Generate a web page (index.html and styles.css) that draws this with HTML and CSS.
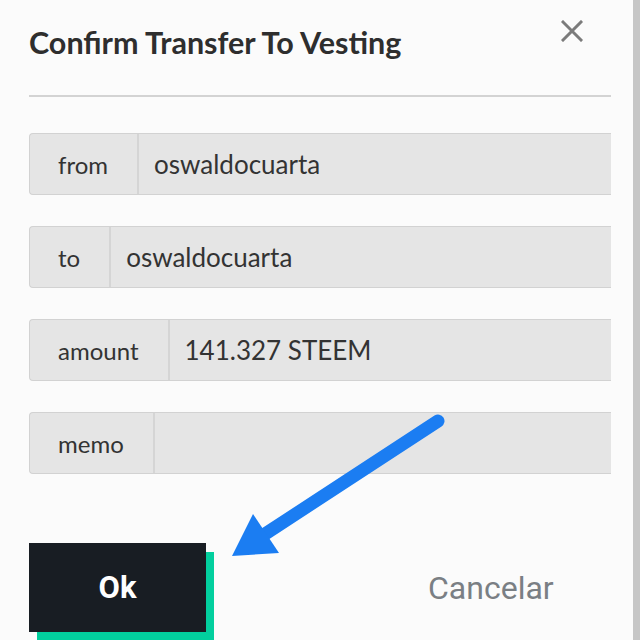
FILE: index.html
```html
<!DOCTYPE html>
<html>
<head>
<meta charset="utf-8">
<link rel="stylesheet" href="styles.css">
</head>
<body>
<div class="page">
  <div class="dialog">
    <div class="header">
      <h1 class="title">Confirm Transfer To Vesting</h1>
      <svg class="close" width="22" height="22" viewBox="0 0 22 22"><path d="M2 2L20 20M20 2L2 20" stroke="#7b7b7b" stroke-width="3" stroke-linecap="square"/></svg>
    </div>
    <div class="divider"></div>
    <div class="fields">
      <div class="field"><span class="label">from</span><span class="value">oswaldocuarta</span></div>
      <div class="field"><span class="label">to</span><span class="value">oswaldocuarta</span></div>
      <div class="field"><span class="label">amount</span><span class="value">141.327 STEEM</span></div>
      <div class="field"><span class="label">memo</span><span class="value"></span></div>
    </div>
    <div class="actions">
      <button class="ok">Ok</button>
      <button class="cancel">Cancelar</button>
    </div>
  </div>
  <div class="strip"></div>
  <svg class="arrow" width="640" height="640" viewBox="0 0 640 640">
    <line x1="438" y1="421" x2="262" y2="536" stroke="#1b7df2" stroke-width="13" stroke-linecap="round"/>
    <polygon points="232,556 253,514 279,553" fill="#1b7df2"/>
  </svg>
</div>
</body>
</html>
```
FILE: styles.css
```css
html, body {
  margin: 0;
  padding: 0;
  background: #fbfbfb;
}
.page {
  position: relative;
  display: flex;
  width: 640px;
  height: 640px;
  overflow: hidden;
}
.dialog {
  flex: 1;
  padding: 0 22px 0 29px;
  font-family: Lato, "Open Sans", sans-serif;
  color: #333;
}
.strip {
  width: 7px;
  background: #c6c6c6;
}
.header {
  display: flex;
  justify-content: space-between;
  align-items: flex-start;
  height: 95px;
}
.title {
  margin: 23px 0 0 0;
  font-size: 30.5px;
  line-height: 38px;
  font-weight: 700;
  color: #2e2e2e;
}
.close {
  margin-top: 20px;
  margin-right: 28px;
}
.divider {
  height: 2px;
  background: #d3d3d3;
}
.fields {
  display: flex;
  flex-direction: column;
  gap: 31px;
  margin-top: 36px;
}
.field {
  display: flex;
  height: 60px;
  border: 1px solid #d2d2d2;
  border-right: none;
  border-radius: 4px 0 0 4px;
  background: #e5e5e5;
}
.label {
  display: flex;
  align-items: center;
  padding: 0 29px 0 28px;
  border-right: 2px solid #d5d5d5;
  font-size: 24px;
  color: #333;
}
.value {
  display: flex;
  align-items: center;
  padding-left: 15px;
  font-size: 26px;
  color: #333;
}
.actions {
  display: flex;
  align-items: center;
  margin-top: 69px;
}
.ok {
  width: 177px;
  height: 89px;
  border: none;
  background: #181d23;
  color: #fff;
  font-family: Roboto, sans-serif;
  font-weight: 700;
  font-size: 31px;
  box-shadow: 8px 9px 0 #02cf9e;
  padding: 0;
}
.cancel {
  border: none;
  background: none;
  margin-left: 222px;
  padding: 0;
  font-family: Roboto, sans-serif;
  font-size: 32px;
  color: #7a7f84;
}
.arrow {
  position: absolute;
  left: 0;
  top: 0;
  pointer-events: none;
}
```
